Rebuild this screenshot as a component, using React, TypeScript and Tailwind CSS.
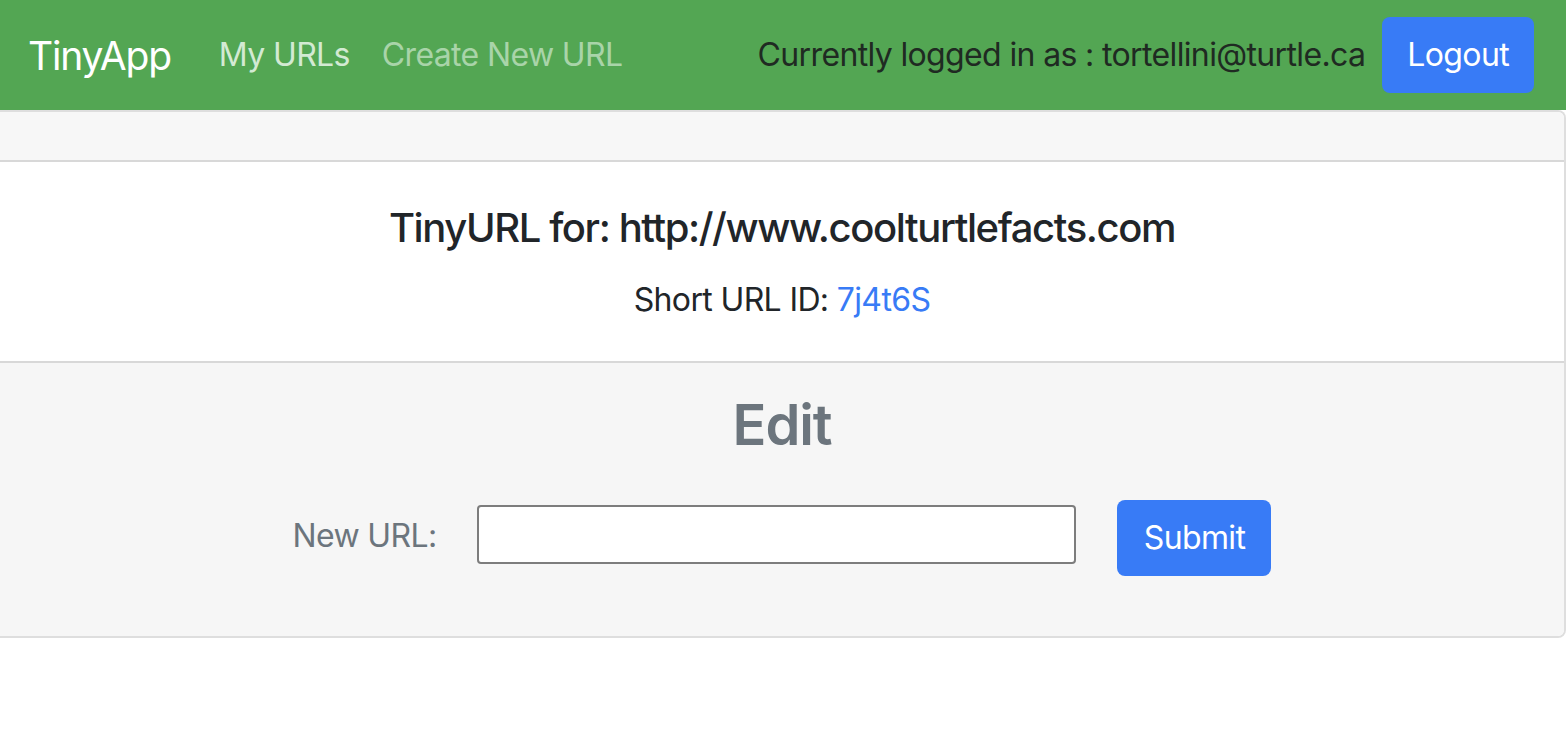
import React, { useState } from "react";

const App: React.FC = () => {
  const [newUrl, setNewUrl] = useState<string>("");

  return (
    <div
      className="min-h-[730px] bg-white text-[#212529]"
      style={{ fontFamily: "Inter, 'Noto Sans', sans-serif" }}
    >
      {/* Navbar */}
      <nav className="h-[110px] bg-[#53a653] flex items-center justify-between pl-[28px] pr-[32px]">
        <div className="flex items-center">
          <a className="text-[39px] text-white leading-none tracking-[-0.03em] mr-[32px]">TinyApp</a>
          <a className="text-[32px] text-[#d3ead3] px-[16px] tracking-[-0.02em]">My URLs</a>
          <a className="text-[32px] text-[#a9d4a9] px-[16px] tracking-[-0.02em]">Create New URL</a>
        </div>
        <div className="flex items-center gap-[17px]">
          <span className="text-[32px] text-[#1f2a22] tracking-[-0.02em]">
            Currently logged in as : tortellini@turtle.ca
          </span>
          <button className="h-[76px] px-[25px] rounded-[8px] bg-[#387bf6] text-white text-[32px] tracking-[-0.02em]">
            Logout
          </button>
        </div>
      </nav>

      {/* Card */}
      <div className="border-y-2 border-r-2 border-[#dedede] rounded-r-[8px] overflow-hidden">
        <div className="h-[50px] bg-[#f7f7f7] border-b-2 border-[#d8d8d8]"></div>

        <div className="bg-white pt-[42px] pb-[37px] text-center">
          <h5 className="text-[40px] leading-[48px] font-medium tracking-[-0.035em] mb-[24px]">
            TinyURL for: http://www.coolturtlefacts.com
          </h5>
          <p className="text-[32px] leading-[48px] tracking-[-0.02em]">
            Short URL ID: <a className="text-[#387bf6]">7j4t6S</a>
          </p>
        </div>

        <div className="bg-[#f6f6f6] border-t-2 border-[#d8d8d8] pt-[29px] pb-[60px]">
          <h3 className="text-center text-[56px] leading-[67px] font-semibold text-[#6c757d] tracking-[-0.02em]">
            Edit
          </h3>
          <form
            className="flex items-center justify-center mt-[41px]"
            onSubmit={(e) => e.preventDefault()}
          >
            <label className="text-[32px] text-[#6c757d] tracking-[-0.02em] mr-[41px] -mt-[4px]">
              New URL:
            </label>
            <input
              type="text"
              value={newUrl}
              onChange={(e) => setNewUrl(e.target.value)}
              className="w-[599px] h-[59px] bg-white border-2 border-[#7d7d7d] rounded-[4px] px-2 text-[28px] -mt-[8px] outline-none"
            />
            <button
              type="submit"
              className="ml-[41px] h-[76px] w-[154px] rounded-[8px] bg-[#387bf6] text-white text-[32px] tracking-[-0.02em]"
            >
              Submit
            </button>
          </form>
        </div>
      </div>
    </div>
  );
};

export default App;
